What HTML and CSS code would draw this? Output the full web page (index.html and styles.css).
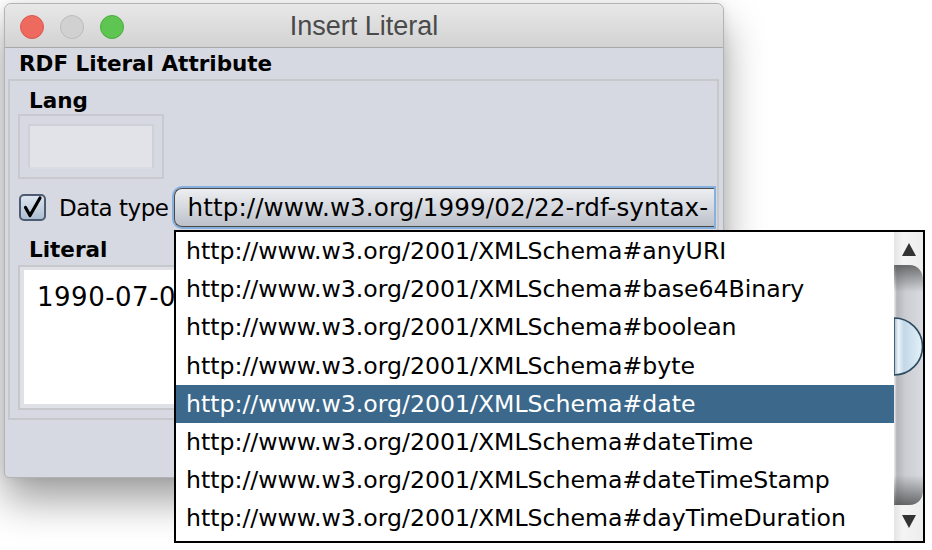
FILE: index.html
```html
<!DOCTYPE html>
<html>
<head>
<meta charset="utf-8">
<link rel="stylesheet" href="styles.css">
</head>
<body>
<div class="desk">
  <div class="window">
    <div class="titlebar">
      <div class="lights">
        <span class="light red"></span>
        <span class="light gray"></span>
        <span class="light green"></span>
      </div>
      <div class="title">Insert Literal</div>
      <div></div>
    </div>
    <div class="content">
      <div class="heading">RDF Literal Attribute</div>
      <div class="panel">
        <div class="label">Lang</div>
        <div class="lang-box"><div class="lang-field"></div></div>
        <div class="dt-row">
          <span class="checkbox">
            <svg width="27" height="27" viewBox="0 0 27 27"><path d="M6.5 13.5 L11 21.5 L21 4" fill="none" stroke="#000" stroke-width="3.2" stroke-linecap="round" stroke-linejoin="round"/></svg>
          </span>
          <span class="dt-label">Data type</span>
          <div class="combo"><span class="combo-text">http://www.w3.org/1999/02/22-rdf-syntax-</span></div>
        </div>
        <div class="label lit-label">Literal</div>
        <div class="lit-box"><div class="lit-area">1990-07-04</div></div>
      </div>
    </div>
  </div>

  <div class="popup">
    <ul class="list">
      <li>http://www.w3.org/2001/XMLSchema#anyURI</li>
      <li>http://www.w3.org/2001/XMLSchema#base64Binary</li>
      <li>http://www.w3.org/2001/XMLSchema#boolean</li>
      <li>http://www.w3.org/2001/XMLSchema#byte</li>
      <li class="selected">http://www.w3.org/2001/XMLSchema#date</li>
      <li>http://www.w3.org/2001/XMLSchema#dateTime</li>
      <li>http://www.w3.org/2001/XMLSchema#dateTimeStamp</li>
      <li>http://www.w3.org/2001/XMLSchema#dayTimeDuration</li>
    </ul>
    <div class="scrollbar">
      <svg width="29" height="309" viewBox="0 0 29 309">
        <defs>
          <linearGradient id="track" x1="0" y1="0" x2="1" y2="0">
            <stop offset="0" stop-color="#eeeeef"/>
            <stop offset="0.1" stop-color="#b3b5ba"/>
            <stop offset="0.4" stop-color="#cbcdd2"/>
            <stop offset="1" stop-color="#d9dbe0"/>
          </linearGradient>
          <linearGradient id="shadeTop" x1="0" y1="0" x2="0" y2="1">
            <stop offset="0" stop-color="#3a3a3a" stop-opacity="0.75"/>
            <stop offset="1" stop-color="#3a3a3a" stop-opacity="0"/>
          </linearGradient>
          <linearGradient id="shadeBot" x1="0" y1="1" x2="0" y2="0">
            <stop offset="0" stop-color="#3a3a3a" stop-opacity="0.75"/>
            <stop offset="1" stop-color="#3a3a3a" stop-opacity="0"/>
          </linearGradient>
          <linearGradient id="btn" x1="0" y1="0" x2="1" y2="0">
            <stop offset="0" stop-color="#e4e4e6"/>
            <stop offset="0.3" stop-color="#f4f4f5"/>
            <stop offset="1" stop-color="#ededee"/>
          </linearGradient>
          <linearGradient id="thumb" x1="0" y1="0" x2="1" y2="0">
            <stop offset="0" stop-color="#9fb6c9"/>
            <stop offset="0.15" stop-color="#eef5fa"/>
            <stop offset="0.35" stop-color="#c2d8e8"/>
            <stop offset="1" stop-color="#e4f1f9"/>
          </linearGradient>
        </defs>
        <rect x="0" y="0" width="29" height="309" fill="url(#track)"/>
        <rect x="0" y="30" width="29" height="30" fill="url(#shadeTop)"/>
        <rect x="0" y="243" width="29" height="32" fill="url(#shadeBot)"/>
        <path d="M0 0 H29 V49 C29 40 25 33 15 33 H0 Z" fill="url(#btn)"/>
        <path d="M0 309 H29 V258 C29 266 25 273 15 273 H0 Z" fill="url(#btn)"/>
        <path d="M8 24 L22 24 L15 11 Z" fill="#333"/>
        <path d="M8 283 L22 283 L15 296 Z" fill="#333"/>
        <path d="M0 86 A28.5 28.5 0 0 1 0 143 Z" fill="url(#thumb)" stroke="#2b4a60" stroke-width="1.6"/>
      </svg>
    </div>
  </div>
</div>
</body>
</html>
```

FILE: styles.css
```css
html, body {
  margin: 0;
  padding: 0;
  background: #ffffff;
}

body {
  width: 932px;
  height: 550px;
  overflow: hidden;
  font-family: "DejaVu Sans", "Liberation Sans", sans-serif;
}

.desk {
  position: relative;
  width: 932px;
  height: 550px;
  padding: 3px 0 0 4px;
  box-sizing: border-box;
}

.window {
  width: 720px;
  height: 475px;
  box-sizing: border-box;
  border: 1px solid #b3b3b3;
  border-radius: 7px 7px 5px 5px;
  background: #d6d9e1;
  display: flex;
  flex-direction: column;
  overflow: hidden;
  box-shadow: 0 22px 40px rgba(0, 0, 0, 0.38), 0 0 12px rgba(0, 0, 0, 0.08);
}

.titlebar {
  height: 43px;
  flex: none;
  border-bottom: 1px solid #a9a9a9;
  background: linear-gradient(#e8e8e8, #d2d2d2);
  display: grid;
  grid-template-columns: 1fr auto 1fr;
  align-items: center;
}

.lights {
  display: flex;
  gap: 16px;
  padding-left: 15px;
}

.light {
  width: 24px;
  height: 24px;
  border-radius: 50%;
  box-sizing: border-box;
  margin-top: 2px;
}

.red {
  background: #ee6a5e;
  border: 1px solid #d9574c;
}

.gray {
  background: #d1d1d1;
  border: 1px solid #bcbcbc;
}

.green {
  background: #5ec452;
  border: 1px solid #4aac3f;
}

.title {
  font-family: "Liberation Sans", Arial, sans-serif;
  font-size: 27px;
  color: #4a4a4a;
  padding-top: 2px;
}

.content {
  flex: 1;
  display: flex;
  flex-direction: column;
}

.heading {
  font-weight: bold;
  font-size: 21.5px;
  line-height: 30px;
  padding: 1px 0 0 14px;
  color: #000;
}

.panel {
  margin: 0 4px 0 3px;
  border: 2px solid #c6c8cc;
  padding: 7px 0 8px 0;
  display: flex;
  flex-direction: column;
}

.label {
  font-weight: bold;
  font-size: 21.5px;
  line-height: 26px;
  padding-left: 19px;
  color: #000;
}

.lang-box {
  margin-left: 8px;
  width: 146px;
  height: 65px;
  box-sizing: border-box;
  border: 2px solid #c8cacf;
  padding: 8px;
}

.lang-field {
  height: 100%;
  box-sizing: border-box;
  background: #e1e3e8;
  border: 2px solid #ced1d7;
  border-bottom-color: #d9dce1;
}

.dt-row {
  margin-top: 7px;
  height: 42px;
  display: flex;
  align-items: center;
}

.checkbox {
  margin-left: 9px;
  width: 27px;
  height: 27px;
  box-sizing: border-box;
  border: 2px solid #4d5c72;
  border-radius: 5px;
  background: linear-gradient(#dde6f0, #aebed2);
  display: flex;
  align-items: center;
  justify-content: center;
  flex: none;
}

.checkbox svg {
  display: block;
  flex: none;
}

.dt-label {
  margin-left: 13px;
  font-size: 23px;
  letter-spacing: -0.45px;
  line-height: 40px;
  padding-top: 2px;
  white-space: nowrap;
  color: #000;
}

.combo {
  margin-left: 5px;
  margin-right: 3px;
  flex: 1;
  height: 39px;
  box-sizing: border-box;
  border: 1px solid #4a4a4a;
  border-right: none;
  border-radius: 8px 0 0 8px;
  box-shadow: 0 0 0 2px #86b0de;
  background: linear-gradient(#eceef1, #d3d6dc 55%, #bcc0c8);
  overflow: hidden;
  white-space: nowrap;
  min-width: 0;
}

.combo-text {
  display: block;
  font-size: 24.6px;
  letter-spacing: 0.1px;
  line-height: 37px;
  padding-left: 13px;
  color: #000;
}

.lit-label {
  margin-top: 9px;
}

.lit-box {
  margin: 2px 8px 0 8px;
  height: 145px;
  box-sizing: border-box;
  border: 2px solid #c6c8cc;
  padding: 3px 4px 4px 4px;
  background: #dfe1e6;
}

.lit-area {
  height: 100%;
  background: #ffffff;
  font-size: 26px;
  letter-spacing: 0.5px;
  line-height: 30px;
  padding: 12px 0 0 13px;
  box-sizing: border-box;
  color: #000;
}

.popup {
  position: absolute;
  left: 174px;
  top: 230px;
  width: 751px;
  height: 313px;
  box-sizing: border-box;
  border: 2px solid #000;
  background: #fff;
  display: flex;
}

.list {
  list-style: none;
  margin: 0;
  padding: 0;
  flex: 1;
  min-width: 0;
}

.list li {
  height: 38.2px;
  line-height: 38.2px;
  padding-left: 10px;
  font-size: 23.6px;
  white-space: nowrap;
  color: #000;
}

.list li.selected {
  background: #3c698b;
  color: #ffffff;
}

.scrollbar {
  width: 29px;
  flex: none;
}

.scrollbar svg {
  display: block;
}
```
